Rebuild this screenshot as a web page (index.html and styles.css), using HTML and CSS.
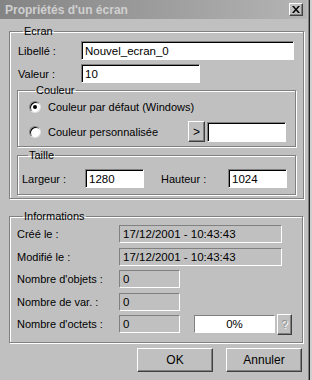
FILE: index.html
```html
<!DOCTYPE html>
<html lang="fr">
  <head>
    <meta charset="UTF-8" />
    <title>Propriétés d'un écran</title>
    <link rel="stylesheet" href="styles.css">
  </head>

  <body>
    <div class="window">
      <!-- Barre de titre -->
      <div class="titlebar">
        <span class="title">Propriétés d'un écran</span>
        <span class="close">
          <svg width="8" height="7" viewBox="0 0 8 7">
            <path d="M0 0h2l2 2.5 2-2.5h2l-3 3.5 3 3.5h-2l-2-2.5-2 2.5h-2l3-3.5z" fill="#000" />
          </svg>
        </span>
      </div>

      <div class="content">
        <!-- Ecran -->
        <fieldset class="group ecran">
          <legend>Ecran</legend>
          <div class="row">
            <label class="lbl">Libellé :</label>
            <span class="edit libelle">Nouvel_ecran_0</span>
          </div>
          <div class="row">
            <label class="lbl">Valeur :</label>
            <span class="edit valeur">10</span>
          </div>

          <fieldset class="group couleur">
            <legend>Couleur</legend>
            <div class="radio-row">
              <span class="radio checked"></span>
              <span>Couleur par défaut (Windows)</span>
            </div>
            <div class="radio-row">
              <span class="radio"></span>
              <span class="grow">Couleur personnalisée</span>
              <span class="btn small">&gt;</span>
              <span class="edit swatch"></span>
            </div>
          </fieldset>

          <fieldset class="group taille">
            <legend>Taille</legend>
            <div class="size-row">
              <label class="lbl-l">Largeur :</label>
              <span class="edit size">1280</span>
              <label class="lbl-h">Hauteur :</label>
              <span class="edit size">1024</span>
            </div>
          </fieldset>
        </fieldset>

        <!-- Informations -->
        <fieldset class="group infos">
          <legend>Informations</legend>
          <div class="info-row">
            <label class="lbl-i">Créé le :</label>
            <span class="ro wide">17/12/2001 - 10:43:43</span>
          </div>
          <div class="info-row">
            <label class="lbl-i">Modifié le :</label>
            <span class="ro wide">17/12/2001 - 10:43:43</span>
          </div>
          <div class="info-row">
            <label class="lbl-i">Nombre d'objets :</label>
            <span class="ro short">0</span>
          </div>
          <div class="info-row">
            <label class="lbl-i">Nombre de var. :</label>
            <span class="ro short">0</span>
          </div>
          <div class="info-row">
            <label class="lbl-i">Nombre d'octets :</label>
            <span class="ro short">0</span>
            <span class="progress">0%</span>
            <span class="btn help">?</span>
          </div>
        </fieldset>

        <div class="actions">
          <span class="btn action">OK</span>
          <span class="btn action">Annuler</span>
        </div>
      </div>
    </div>
  </body>
</html>
```

FILE: styles.css
```css
body {
  margin: 0;
  background-color: #d0d0d0;
  font-family: "Liberation Sans", Arial, sans-serif;
  font-size: 11px;
  color: #000;
}

.window {
  width: 310px;
  height: 380px;
  box-sizing: border-box;
  background-color: #c0c0c0;
  border-right: 1px solid #202020;
  box-shadow: inset -1px 0 0 #808080;
}

/* Barre de titre */
.titlebar {
  height: 19px;
  margin-right: 2px;
  padding: 0 4px 0 5px;
  display: flex;
  align-items: center;
  justify-content: space-between;
  background: linear-gradient(to right, #848484, #b4b4b4);
}

.title {
  font-size: 12px;
  font-weight: bold;
  color: #d0d0d0;
}

.close {
  width: 14px;
  height: 13px;
  box-sizing: border-box;
  display: flex;
  align-items: center;
  justify-content: center;
  background-color: #c0c0c0;
  border: 1px solid;
  border-color: #fff #404040 #404040 #fff;
  box-shadow: inset -1px -1px 0 #808080;
}

.content {
  padding: 5px 6px 0 9px;
}

/* Cadres */
.group {
  margin: 0;
  padding: 0;
  border: 1px solid #808080;
  box-shadow: inset 1px 1px 0 #fff, 1px 1px 0 #fff;
}

.group legend {
  margin-left: 6px;
  padding: 0 1px;
  line-height: 14px;
}

.ecran {
  padding: 3px 7px 3px 7px;
}

.row {
  display: flex;
  align-items: center;
  height: 19px;
}

.row + .row {
  margin-top: 4px;
}

.lbl {
  width: 63px;
  padding-left: 1px;
}

/* Champs de saisie */
.edit {
  box-sizing: border-box;
  height: 19px;
  padding: 2px 3px;
  background-color: #fff;
  border: 1px solid;
  border-color: #808080 #fff #fff #808080;
  box-shadow: inset 1px 1px 0 #000;
  font-size: 11.5px;
  line-height: 14px;
}

.libelle {
  width: 213px;
}

.valeur {
  width: 119px;
}

.couleur {
  margin-top: 0;
  padding: 0 9px 4px 11px;
}

.radio-row {
  display: flex;
  align-items: center;
  height: 19px;
}

.radio-row + .radio-row {
  height: 21px;
  margin-top: 5px;
}

.radio {
  width: 12px;
  height: 12px;
  box-sizing: border-box;
  margin-right: 7px;
  border-radius: 50%;
  background-color: #fff;
  border: 1px solid;
  border-color: #808080 #e0e0e0 #e0e0e0 #808080;
  box-shadow: inset 1px 1px 0 #000;
  display: flex;
  align-items: center;
  justify-content: center;
}

.radio.checked::after {
  content: "";
  width: 4px;
  height: 4px;
  border-radius: 50%;
  background-color: #000;
}

.grow {
  flex: 1;
}

/* Boutons */
.btn {
  box-sizing: border-box;
  display: flex;
  align-items: center;
  justify-content: center;
  background-color: #c0c0c0;
  border: 1px solid;
  border-color: #fff #404040 #404040 #fff;
  box-shadow: inset -1px -1px 0 #808080;
}

.small {
  width: 17px;
  height: 21px;
  font-size: 12px;
}

.swatch {
  width: 79px;
  height: 20px;
  margin-left: 2px;
}

.taille {
  margin-top: 1px;
  padding: 7px 8px 6px 4px;
}

.size-row {
  display: flex;
  align-items: center;
  height: 19px;
}

.lbl-l {
  width: 63px;
}

.lbl-h {
  width: 67px;
  margin-left: 17px;
}

.size {
  width: 59px;
  height: 19px;
}

/* Informations */
.infos {
  margin-top: 10px;
  padding: 2px 7px 9px 7px;
}

.info-row {
  display: flex;
  align-items: center;
  height: 18px;
  margin-bottom: 4.5px;
}

.info-row:last-child {
  margin-bottom: 0;
}

.lbl-i {
  width: 102px;
}

.ro {
  box-sizing: border-box;
  height: 18px;
  padding: 1px 3px;
  border: 1px solid;
  border-color: #808080 #fff #fff #808080;
  font-size: 11.5px;
  line-height: 14px;
}

.wide {
  width: 163px;
}

.short {
  width: 61px;
}

.progress {
  box-sizing: border-box;
  width: 81px;
  height: 18px;
  margin-left: 14px;
  background-color: #fff;
  border: 1px solid;
  border-color: #808080 #fff #fff #808080;
  text-align: center;
  font-size: 11.5px;
  line-height: 16px;
}

.help {
  width: 15px;
  height: 21px;
  margin-left: 2px;
  color: #909090;
  text-shadow: 1px 1px 0 #fff;
}

.actions {
  display: flex;
  justify-content: flex-end;
  gap: 13px;
  padding: 5px 1px 0 0;
}

.action {
  width: 76px;
  height: 24px;
  font-size: 12px;
}
```
